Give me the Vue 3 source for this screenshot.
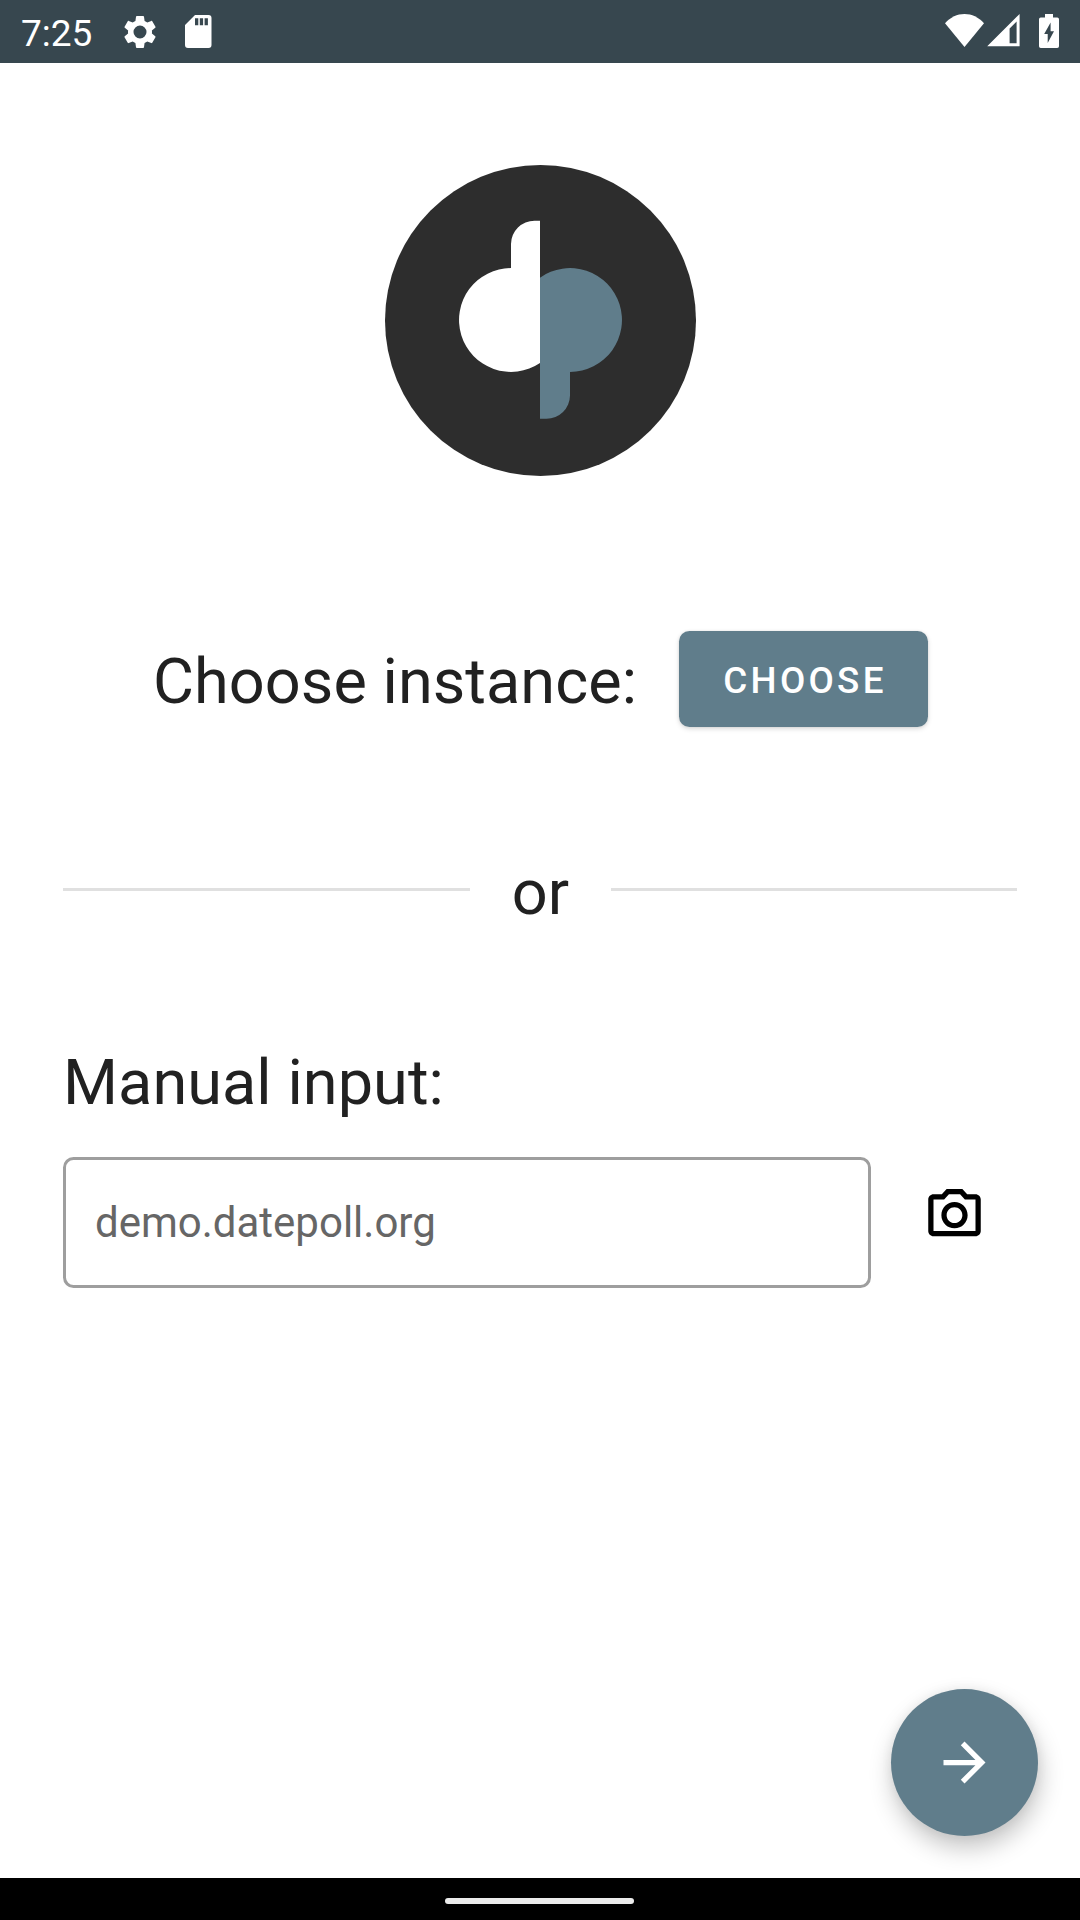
<script setup>
const time = '7:25'
const server = 'demo.datepoll.org'
</script>

<template>
  <div class="screen">
    <header class="status">
      <span class="time">{{ time }}</span>
      <svg class="gear" viewBox="0 0 24 24"><path fill="#fff" d="M19.14 12.94c.04-.3.06-.61.06-.94 0-.32-.02-.64-.07-.94l2.03-1.58c.18-.14.23-.41.12-.61l-1.92-3.32c-.12-.22-.37-.29-.59-.22l-2.39.96c-.5-.38-1.03-.7-1.62-.94l-.36-2.54c-.04-.24-.24-.41-.48-.41h-3.84c-.24 0-.43.17-.47.41l-.36 2.54c-.59.24-1.13.57-1.62.94l-2.39-.96c-.22-.08-.47 0-.59.22L2.74 8.87c-.12.21-.08.47.12.61l2.03 1.58c-.05.3-.09.63-.09.94s.02.64.07.94l-2.03 1.58c-.18.14-.23.41-.12.61l1.92 3.32c.12.22.37.29.59.22l2.39-.96c.5.38 1.03.7 1.62.94l.36 2.54c.05.24.24.41.48.41h3.84c.24 0 .44-.17.47-.41l.36-2.54c.59-.24 1.13-.56 1.62-.94l2.39.96c.22.08.47 0 .59-.22l1.92-3.32c.12-.22.07-.47-.12-.61l-2.01-1.58zM12 15.9A3.900 3.900 0 1 1 12 8.100a3.900 3.900 0 0 1 0 7.800z"/></svg>
      <svg class="sd" viewBox="0 0 27 33"><path fill="#fff" fill-rule="evenodd" d="M10 0H23.500a3 3 0 0 1 3 3V30a3 3 0 0 1-3 3H3a3 3 0 0 1-3-3V10zM10 3.3V10.3H13.300V3.300zM14.800 3.300V10.300H18.100V3.300zM19.600 3.300V10.300H22.900V3.300z"/></svg>
      <span class="grow"></span>
      <svg class="wifi" viewBox="0 0 39 33"><path fill="#fff" d="M0 9.200C5.500 3.200 12.200 0 19.500 0S33.500 3.200 39 9.200L19.500 33z"/></svg>
      <svg class="signal" viewBox="0 0 33 33"><path fill="#fff" fill-rule="evenodd" d="M32.600 0V32.200H0.200zM29.600 7.500L22.600 14.500V29.200H29.600z"/></svg>
      <svg class="battery" viewBox="0 0 20 34"><path fill="#fff" fill-rule="evenodd" d="M6 0H14V3.400H18.200A1.800 1.800 0 0 1 20 5.200V32.200A1.800 1.800 0 0 1 18.200 34H1.800A1.800 1.800 0 0 1 0 32.200V5.200A1.800 1.800 0 0 1 1.800 3.400H6zM11.600 8.500L5.200 20H8.700V29L15 17.300H11.600z"/></svg>
    </header>

    <main class="content">
      <svg class="logo" viewBox="385 165 311 311">
        <circle cx="540.5" cy="320.500" r="155.500" fill="#2d2d2d"/>
        <path fill="#fff" d="M540 220.700V363A51.900 51.900 0 1 1 511 268.100V244A23.500 23.500 0 0 1 534.500 220.700z"/>
        <path fill="#607d8b" d="M540 418.700V277.700A51.900 51.900 0 1 1 570 371.900V395.500A23.500 23.500 0 0 1 546.500 418.700z"/>
      </svg>

      <section class="choose-row">
        <span class="heading">Choose instance:</span>
        <button class="choose">CHOOSE</button>
      </section>

      <section class="divider">
        <i class="line"></i>
        <span class="heading or">or</span>
        <i class="line right"></i>
      </section>

      <h2 class="heading manual">Manual input:</h2>
      <section class="input-row">
        <div class="field">{{ server }}</div>
        <svg class="camera" viewBox="0 0 24 24"><path d="M20 5h-3.170L15 3H9L7.170 5H4c-1.100 0-2 .9-2 2v12c0 1.100.9 2 2 2h16c1.100 0 2-.9 2-2V7c0-1.100-.9-2-2-2zm0 14H4V7h4.050l1.830-2h4.240l1.830 2H20v12zM12 8c-2.760 0-5 2.240-5 5s2.240 5 5 5 5-2.240 5-5-2.240-5-5-5zm0 8c-1.650 0-3-1.350-3-3s1.350-3 3-3 3 1.350 3 3-1.350 3-3 3z"/></svg>
      </section>

      <button class="fab">
        <svg viewBox="0 0 24 24"><path fill="#fff" d="M12 4l-1.410 1.410L16.170 11H4v2h12.170l-5.580 5.590L12 20l8-8z"/></svg>
      </button>
    </main>

    <footer class="nav"><i class="pill"></i></footer>
  </div>
</template>

<style>
body { margin: 0; }
</style>

<style scoped>
.screen {
  display: flex;
  flex-direction: column;
  width: 1080px;
  height: 1920px;
  overflow: hidden;
  background: #fff;
  color: #212121;
  font-family: Roboto, "Noto Sans", sans-serif;
}
svg { display: block; flex: none; }
.status {
  display: flex;
  align-items: flex-start;
  height: 63px;
  flex: none;
  box-sizing: border-box;
  padding: 0 21px;
  background: #37474f;
}
.time {
  width: 99px;
  margin-top: 12px;
  color: #fff;
  font-size: 37px;
  line-height: 44px;
}
.gear { width: 40px; height: 40px; margin-top: 12px; }
.sd { width: 27px; height: 33px; margin: 15px 0 0 25px; }
.grow { flex: 1; }
.wifi { width: 39px; height: 33px; margin-top: 14px; }
.signal { width: 33px; height: 33px; margin: 14px 0 0 3px; }
.battery { width: 20px; height: 34px; margin: 14px 0 0 19px; }
.content {
  display: flex;
  flex-direction: column;
  height: 1815px;
  flex: none;
}
.logo { width: 311px; height: 311px; margin: 102px 0 0 385px; }
.heading {
  margin: 0;
  font-size: 63px;
  font-weight: 400;
  line-height: 74px;
  letter-spacing: .06px;
  white-space: nowrap;
}
.choose-row {
  display: flex;
  align-items: flex-start;
  justify-content: space-between;
  margin: 155px 152px 0 153px;
  height: 96px;
}
.choose-row .heading { margin-top: 14px; }
.choose {
  width: 249px;
  height: 96px;
  padding: 3px 0 0 3px;
  border: 0;
  border-radius: 10.5px;
  background: #607d8b;
  color: #fff;
  font: 500 36.75px/44px Roboto, sans-serif;
  letter-spacing: 3.28px;
  box-shadow: 0 2px 5px rgba(0, 0, 0, .14), 0 0 3px rgba(0, 0, 0, .08);
}
.divider {
  display: flex;
  height: 74px;
  margin: 128px 63px 0;
}
.line { width: 407px; height: 3px; flex: none; margin-top: 33px; background: #e0e0e0; }
.line.right { width: 406px; }
.or { flex: 1; margin-top: 1px; text-align: center; }
.manual { margin: 117px 0 0 63px; }
.input-row { display: flex; margin: 37px 0 0 63px; }
.field {
  box-sizing: border-box;
  width: 808px;
  height: 131px;
  padding: 0 29px;
  border: 3px solid #9e9e9e;
  border-radius: 10.5px;
  color: #666;
  font-size: 42px;
  line-height: 125px;
}
.camera { width: 63px; height: 63px; margin: 24px 0 0 52px; }
.fab {
  display: flex;
  align-items: center;
  justify-content: center;
  width: 147px;
  height: 147px;
  margin: auto 42px 42px auto;
  padding: 0;
  border: 0;
  border-radius: 50%;
  background: #607d8b;
  box-shadow: 2px 12px 24px rgba(0, 0, 0, .23), 0 0 12px rgba(0, 0, 0, .06);
}
.fab svg { width: 63px; height: 63px; }
.nav { display: flex; height: 42px; flex: none; background: #000; }
.pill {
  width: 189px;
  height: 6px;
  margin: 20px 0 0 445px;
  border-radius: 3px;
  background: #ebebeb;
}
</style>
